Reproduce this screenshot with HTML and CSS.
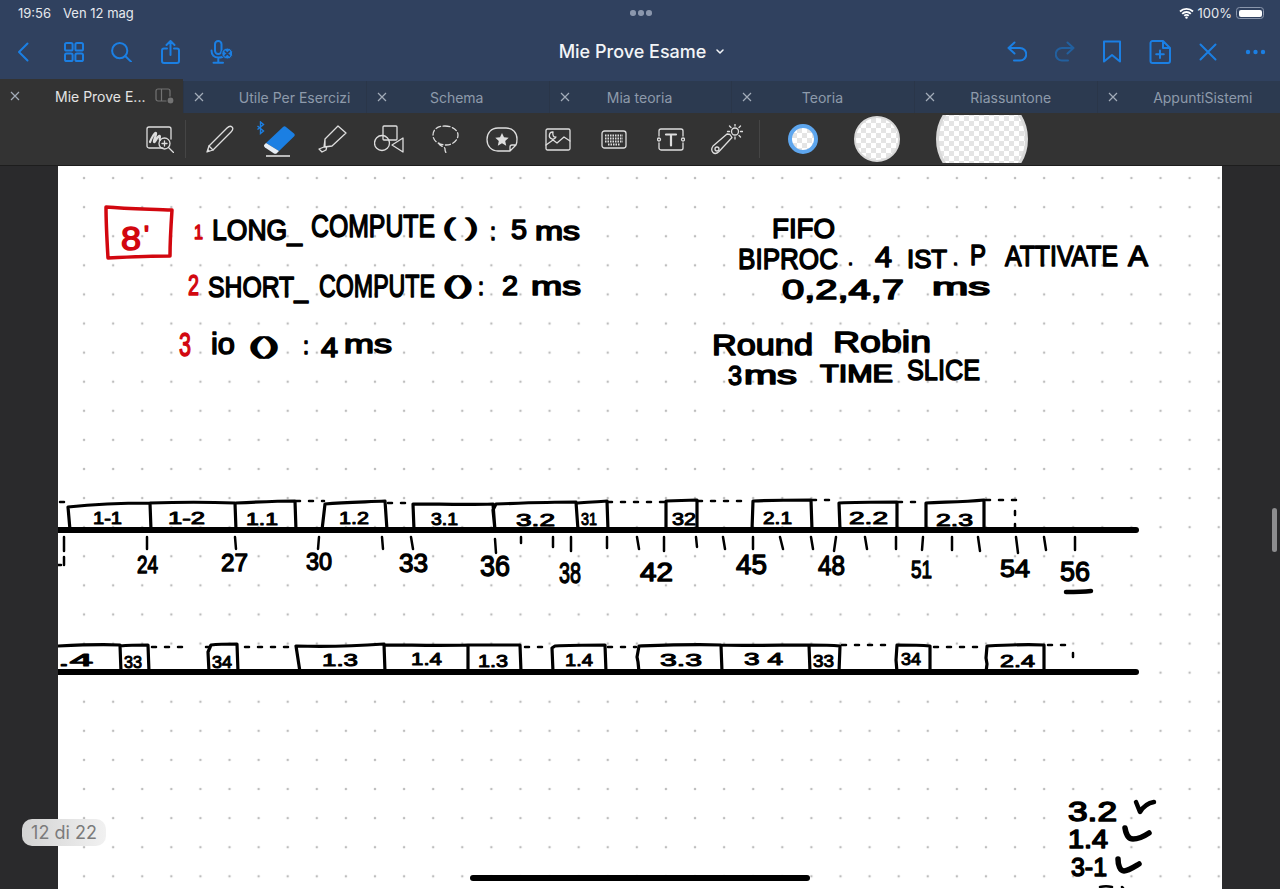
FILE: index.html
```html
<!DOCTYPE html>
<html lang="it">
<head>
    <meta charset="UTF-8">
    <meta name="viewport" content="width=device-width, initial-scale=1.0">
    <title>Mie Prove Esame</title>
    <link rel="stylesheet" href="styles.css">
</head>
<body>

    <header class="top-bar">
        <div class="status-bar">
            <div class="status-left"><span>19:56</span><span>Ven 12 mag</span></div>
            <div class="status-dots"><i></i><i></i><i></i></div>
            <div class="status-right">
                <svg width="15" height="12" viewBox="0 0 15 12"><path class="wifi" d="M1 4.5a9.2 9.2 0 0 1 13 0M3.2 6.8a6 6 0 0 1 8.6 0M5.3 8.9a3 3 0 0 1 4.4 0"/><circle cx="7.5" cy="10.6" r="1.2" fill="#fff"/></svg>
                <span>100%</span>
                <div class="battery"><div class="battery-fill"></div></div>
            </div>
        </div>
        <nav class="nav-bar">
            <div class="nav-group">
                <svg class="nav-icon back" width="12" height="20" viewBox="0 0 12 20"><path d="M10.5 1.5 2 10l8.5 8.5"/></svg>
                <svg class="nav-icon grid" width="20" height="20" viewBox="0 0 20 20"><rect x="1" y="1" width="7.6" height="7.6" rx="1.6"/><rect x="11.4" y="1" width="7.6" height="7.6" rx="1.6"/><rect x="1" y="11.4" width="7.6" height="7.6" rx="1.6"/><rect x="11.4" y="11.4" width="7.6" height="7.6" rx="1.6"/></svg>
                <svg class="nav-icon search" width="21" height="20" viewBox="0 0 21 20"><circle cx="8.7" cy="8.7" r="7.6"/><path d="m14.2 14 5.8 5.6"/></svg>
                <svg class="nav-icon share" width="19" height="24" viewBox="0 0 19 24"><path d="M6 8.5H3a2 2 0 0 0-2 2V21a2 2 0 0 0 2 2h13a2 2 0 0 0 2-2V10.500a2 2 0 0 0-2-2h-3M9.500 15V1.500M5.500 5l4-4 4 4"/></svg>
                <svg class="nav-icon mic" width="23" height="24" viewBox="0 0 23 24"><rect x="5" y="1" width="6.500" height="13" rx="3.200"/><path d="M1.500 10.500c0 4.500 2.800 7 6.800 7s5-1 5-1M8.300 17.500V22M3.500 22.800h9.500"/><circle class="mic-badge" cx="17.300" cy="13.500" r="5.500"/><path class="mic-x" d="m15.200 11.400 4.200 4.200m0-4.200-4.200 4.200"/></svg>
            </div>
            <div class="doc-title">Mie Prove Esame
                <svg class="doc-caret" width="8" height="5" viewBox="0 0 8 5"><path d="m1 1 3 3 3-3"/></svg>
            </div>
            <div class="nav-group nav-group-right">
                <svg class="nav-icon" width="20" height="21" viewBox="0 0 20 21"><path d="M7.500 1.500 1.500 7l6 5.500M1.500 7H13a5.800 5.800 0 0 1 0 12.500H7"/></svg>
                <svg class="nav-icon dim" width="20" height="21" viewBox="0 0 20 21"><path d="m12.500 1.500 6 5.500-6 5.500M18.500 7H7a5.800 5.800 0 0 0 0 12.500h6"/></svg>
                <svg class="nav-icon" width="18" height="23" viewBox="0 0 18 23"><path d="M1 1.500h16V21.500l-8-6.500-8 6.500z"/></svg>
                <svg class="nav-icon" width="22" height="24" viewBox="0 0 22 24"><path d="M3.500 1H14l7 7v13a2 2 0 0 1-2 2H3.500a2 2 0 0 1-2-2V3a2 2 0 0 1 2-2zM14 1v7h7M11 10.500v7.500M7.200 14.200h7.600"/></svg>
                <svg class="nav-icon" width="18" height="18" viewBox="0 0 18 18"><path d="M1.500 1.500 16.500 16.500M16.500 1.500 1.500 16.500"/></svg>
                <svg class="nav-dots" width="21" height="6" viewBox="0 0 21 6"><circle cx="3" cy="3" r="2.200"/><circle cx="10.500" cy="3" r="2.200"/><circle cx="18" cy="3" r="2.200"/></svg>
            </div>
        </nav>
    </header>

    <div class="tab-row">
        <div class="tab tab-active">
            <svg class="tab-close" width="10" height="10" viewBox="0 0 10 10"><path d="m1 1 8 8m0-8-8 8"/></svg>
            <span class="tab-label">Mie Prove E...</span>
            <svg class="tab-split" width="20" height="17" viewBox="0 0 20 17"><rect x="1" y="1" width="14" height="12" rx="2"/><path d="M6.500 1v12"/><circle class="tab-split-dot" cx="15.500" cy="12.500" r="3.500"/></svg>
        </div>
        <div class="tab">
            <svg class="tab-close" width="10" height="10" viewBox="0 0 10 10"><path d="m1 1 8 8m0-8-8 8"/></svg>
            <span class="tab-label">Utile Per Esercizi</span>
        </div>
        <div class="tab">
            <svg class="tab-close" width="10" height="10" viewBox="0 0 10 10"><path d="m1 1 8 8m0-8-8 8"/></svg>
            <span class="tab-label">Schema</span>
        </div>
        <div class="tab">
            <svg class="tab-close" width="10" height="10" viewBox="0 0 10 10"><path d="m1 1 8 8m0-8-8 8"/></svg>
            <span class="tab-label">Mia teoria</span>
        </div>
        <div class="tab">
            <svg class="tab-close" width="10" height="10" viewBox="0 0 10 10"><path d="m1 1 8 8m0-8-8 8"/></svg>
            <span class="tab-label">Teoria</span>
        </div>
        <div class="tab">
            <svg class="tab-close" width="10" height="10" viewBox="0 0 10 10"><path d="m1 1 8 8m0-8-8 8"/></svg>
            <span class="tab-label">Riassuntone</span>
        </div>
        <div class="tab">
            <svg class="tab-close" width="10" height="10" viewBox="0 0 10 10"><path d="m1 1 8 8m0-8-8 8"/></svg>
            <span class="tab-label">AppuntiSistemi</span>
        </div>
    </div>

    <div class="toolbar">
        <div class="tool tool-zoom">
            <svg class="tool-icon" width="28" height="27" viewBox="0 0 28 27"><path d="M17 22H3a2 2 0 0 1-2-2V3a2 2 0 0 1 2-2h20a2 2 0 0 1 2 2v10"/><path class="thick" d="M4 16c2-5 5-10 6-9s-3 8-2 9 3-5 5-6 0 3 1 4"/><circle cx="18.500" cy="17.500" r="5.500"/><path d="m22.500 21.500 5 5M18.500 15v5M16 17.500h5"/></svg>
        </div>
        <div class="tool-divider"></div>
        <div class="tool">
            <svg class="tool-icon" width="28" height="28" viewBox="0 0 28 28"><path d="M1 27l2-6L21 3c2-2 4-2 5-1s1 3-1 5L7 25z"/><path d="m3 21 4 4"/><path class="solid" d="m1 27 1-3 2 2z"/></svg>
        </div>
        <div class="tool">
            <svg width="40" height="36" viewBox="0 0 40 36"><path class="bt" d="m1.500 5 6 5-3 2.500V1l3 2.500-6 5"/><path class="eraser-body" d="M10 22 27 6c1-1 2-1 3 0l8 6.500c1 1 1 2 0 3L23 30z"/><path class="eraser-tip" d="m10 22 13 8-2 2c-1 1-2 1-3 .5l-9-6c-1-1-1.500-2-.500-3z"/><path class="eraser-line" d="M10 35h24"/></svg>
        </div>
        <div class="tool">
            <svg class="tool-icon" width="30" height="29" viewBox="0 0 30 29"><path d="m8 14 13-13 8 7-14 13-7 1zM8 14l-1 8M15 21l-8 1M7 22l-5 2 3 3 4-2 .5-2"/></svg>
        </div>
        <div class="tool">
            <svg class="tool-icon" width="30" height="29" viewBox="0 0 30 29"><rect x="9" y="1" width="14" height="14" rx="1"/><circle cx="8" cy="18" r="7.500"/><path d="m29 13v14l-11-7z"/></svg>
        </div>
        <div class="tool">
            <svg class="tool-icon dashed" width="27" height="29" viewBox="0 0 27 29"><path d="M13 1c7 0 13 4 13 9s-5 10-12 10S1 16 1 10 6 1 13 1zM7 18c-1 3 6 3 6 6s1 3 1 4"/></svg>
        </div>
        <div class="tool">
            <svg class="tool-icon" width="32" height="25" viewBox="0 0 32 25"><path d="M20 24h-8C5 24 1 19 1 12.500S5 1 12 1h8c7 0 11 5 11 11 0 3-.5 5-1 6l-6 6zM24 24v-4a2 2 0 0 1 2-2h4"/><path class="solid" d="m16 6 2 4.300 4.700.5-3.500 3.200 1 4.700-4.200-2.400-4.200 2.400 1-4.700-3.500-3.200 4.700-.5z"/></svg>
        </div>
        <div class="tool">
            <svg class="tool-icon" width="26" height="23" viewBox="0 0 26 23"><rect x="1" y="1" width="24" height="21" rx="1.500"/><path d="M1 17 8 12l4 3 7-6 6 4M8 4a3.500 3.500 0 1 0 3 5c-2 .5-4-1-3-5z"/></svg>
        </div>
        <div class="tool">
            <svg class="tool-icon" width="26" height="19" viewBox="0 0 26 19"><rect x="1" y="1" width="24" height="17" rx="2.500"/><path class="dots" d="M4 5.500h18M4 8.500h18M4 11.500h18M7 14.500h12"/></svg>
        </div>
        <div class="tool">
            <svg class="tool-icon" width="28" height="23" viewBox="0 0 28 23"><path d="M2 8V3a2 2 0 0 1 2-2h20a2 2 0 0 1 2 2v5M26 15v5a2 2 0 0 1-2 2H4a2 2 0 0 1-2-2v-5"/><circle cx="2" cy="11.500" r="1.500"/><circle cx="26" cy="11.500" r="1.500"/><path class="thick" d="M9 6.500h10M14 6.500v11"/></svg>
        </div>
        <div class="tool">
            <svg class="tool-icon" width="32" height="31" viewBox="0 0 32 31"><path d="m2 22 14-12 3 .5 2 3-13 14c-2 2-4 3-6 1s-1-5 0-6.500z"/><circle cx="6" cy="25" r="2"/><circle cx="24" cy="7.500" r="3.500"/><path d="M24 0v2M24 13v2M16.500 7.500h2M29.500 7.500h2M18.500 2l1.500 1.500M28 11.500l1.500 1.500M29.500 2 28 3.500"/></svg>
        </div>
        <div class="tool-divider tool-divider-right"></div>
        <div class="swatch swatch-blue"></div>
        <div class="swatch swatch-white"></div>
        <div class="swatch-clip"><div class="swatch swatch-large"></div></div>
    </div>

    <main class="workspace">
        <div class="note-page">
            <svg class="note-ink" width="1164" height="722" viewBox="58 167 1164 722">
                <!-- exercise text -->
                <path class="red-line" d="M106 208c22 2 46 2 66 3-1 15-2 32-2 46-20 0-42 1-62 2-1-17-2-34-2-51z"/>
                <text class="hand red" x="121" y="251" font-size="33" textLength="20" lengthAdjust="spacingAndGlyphs">8</text>
                <text class="hand red" x="144" y="244" font-size="24" textLength="5" lengthAdjust="spacingAndGlyphs">'</text>
                <text class="hand red" x="194" y="240" font-size="20" textLength="9" lengthAdjust="spacingAndGlyphs">1</text>
                <text class="hand red" x="188" y="296" font-size="29" textLength="11" lengthAdjust="spacingAndGlyphs">2</text>
                <text class="hand red" x="179" y="357" font-size="34" textLength="12" lengthAdjust="spacingAndGlyphs">3</text>

                <text class="hand" x="212" y="241" font-size="30" textLength="90" lengthAdjust="spacingAndGlyphs">LONG_</text>
                <text class="hand" x="311" y="238" font-size="32" textLength="124" lengthAdjust="spacingAndGlyphs">COMPUTE</text>
                <text class="hand" x="443" y="236" font-size="24" textLength="35" lengthAdjust="spacingAndGlyphs">( )</text>
                <text class="hand" x="490" y="241" font-size="24" textLength="6" lengthAdjust="spacingAndGlyphs">:</text>
                <text class="hand" x="511" y="240" font-size="28" textLength="16" lengthAdjust="spacingAndGlyphs">5</text>
                <text class="hand" x="535" y="241" font-size="26" textLength="45" lengthAdjust="spacingAndGlyphs">ms</text>

                <text class="hand" x="208" y="298" font-size="30" textLength="100" lengthAdjust="spacingAndGlyphs">SHORT_</text>
                <text class="hand" x="319" y="298" font-size="32" textLength="116" lengthAdjust="spacingAndGlyphs">COMPUTE</text>
                <text class="hand" x="443" y="294" font-size="24" textLength="30" lengthAdjust="spacingAndGlyphs">()</text>
                <text class="hand" x="478" y="296" font-size="24" textLength="6" lengthAdjust="spacingAndGlyphs">:</text>
                <text class="hand" x="502" y="296" font-size="28" textLength="16" lengthAdjust="spacingAndGlyphs">2</text>
                <text class="hand" x="531" y="296" font-size="26" textLength="50" lengthAdjust="spacingAndGlyphs">ms</text>

                <text class="hand" x="211" y="355" font-size="30" textLength="24" lengthAdjust="spacingAndGlyphs">io</text>
                <text class="hand" x="249" y="354" font-size="22" textLength="30" lengthAdjust="spacingAndGlyphs">()</text>
                <text class="hand" x="303" y="355" font-size="24" textLength="6" lengthAdjust="spacingAndGlyphs">:</text>
                <text class="hand" x="321" y="358" font-size="27" textLength="17" lengthAdjust="spacingAndGlyphs">4</text>
                <text class="hand" x="344" y="354" font-size="26" textLength="48" lengthAdjust="spacingAndGlyphs">ms</text>

                <text class="hand" x="772" y="239" font-size="28" textLength="63" lengthAdjust="spacingAndGlyphs">FIFO</text>
                <text class="hand" x="738" y="270" font-size="30" textLength="100" lengthAdjust="spacingAndGlyphs">BIPROC</text>
                <text class="hand" x="848" y="266" font-size="18" textLength="5" lengthAdjust="spacingAndGlyphs">.</text>
                <text class="hand" x="875" y="268" font-size="30" textLength="17" lengthAdjust="spacingAndGlyphs">4</text>
                <text class="hand" x="907" y="269" font-size="25" textLength="40" lengthAdjust="spacingAndGlyphs">IST</text>
                <text class="hand" x="953" y="266" font-size="18" textLength="5" lengthAdjust="spacingAndGlyphs">.</text>
                <text class="hand" x="970" y="266" font-size="29" textLength="16" lengthAdjust="spacingAndGlyphs">P</text>
                <text class="hand" x="1005" y="267" font-size="30" textLength="113" lengthAdjust="spacingAndGlyphs">ATTIVATE</text>
                <text class="hand" x="1128" y="267" font-size="30" textLength="20" lengthAdjust="spacingAndGlyphs">A</text>
                <text class="hand" x="782" y="300" font-size="27" textLength="122" lengthAdjust="spacingAndGlyphs">0,2,4,7</text>
                <text class="hand" x="932" y="296" font-size="24" textLength="58" lengthAdjust="spacingAndGlyphs">ms</text>
                <text class="hand" x="712" y="356" font-size="30" textLength="101" lengthAdjust="spacingAndGlyphs">Round</text>
                <text class="hand" x="833" y="353" font-size="30" textLength="98" lengthAdjust="spacingAndGlyphs">Robin</text>
                <text class="hand" x="728" y="386" font-size="27" textLength="14" lengthAdjust="spacingAndGlyphs">3</text>
                <text class="hand" x="744" y="385" font-size="25" textLength="53" lengthAdjust="spacingAndGlyphs">ms</text>
                <text class="hand" x="820" y="383" font-size="23" textLength="73" lengthAdjust="spacingAndGlyphs">TIME</text>
                <text class="hand" x="907" y="381" font-size="30" textLength="73" lengthAdjust="spacingAndGlyphs">SLICE</text>

                <!-- first timeline -->
                <path class="axis" d="M58 531H1136"/>
                <path class="box-line" d="M70 531 68 508c28-3 54-4 82-4l1 27M150 504c30-1 58-1 85 0l1 27M236 504c20-1 40-2 59-2l1 29M322 531l3-26c20-2 40-2 60-3l2 29M414 531l-1-26c26 0 54 1 80 0l2 26M495 531l-2-20 3-6c26-1 56-2 80-2l2 28M578 504c10-1 20-1 29-2l1 29M666 531V502l31-1v30M752 531l1-29c18-1 38-1 58-1l1 30M840 531l-1-27c18-1 38-1 58-1v28M926 531v-27c18-1 38-1 58-3v30"/>
                <path class="dash-line" d="M60 503h8M296 502h28M388 504h24M608 503h56M698 502h52M812 501h26M898 503h26M986 501h30M1015 512v16"/>
                <path class="tick" d="M64 538v14M147 538v12M235 538l1 12M319 538l-1 12M382 538l1 12M411 538l2 12M495 540l1 14M521 538v6M553 538v10M571 538v14M607 538v11M637 538l2 12M664 538v14M696 538l1 10M723 538l2 12M753 538v12M780 538l3 12M811 538l2 12M836 538l-2 14M865 538l2 12M896 538v12M923 538l-1 13M952 538v13M978 538l2 14M1016 538l2 16M1044 538l2 13M1075 538v13"/>
                <path class="tick" d="M64 558v8M58 566h3"/>
                <text class="hand num" x="137" y="574" font-size="23" textLength="21" lengthAdjust="spacingAndGlyphs">24</text>
                <text class="hand num" x="221" y="572" font-size="24" textLength="27" lengthAdjust="spacingAndGlyphs">27</text>
                <text class="hand num" x="306" y="571" font-size="24" textLength="26" lengthAdjust="spacingAndGlyphs">30</text>
                <text class="hand num" x="399" y="573" font-size="25" textLength="29" lengthAdjust="spacingAndGlyphs">33</text>
                <text class="hand num" x="480" y="577" font-size="29" textLength="30" lengthAdjust="spacingAndGlyphs">36</text>
                <text class="hand num" x="559" y="584" font-size="30" textLength="22" lengthAdjust="spacingAndGlyphs">38</text>
                <text class="hand num" x="640" y="582" font-size="25" textLength="33" lengthAdjust="spacingAndGlyphs">42</text>
                <text class="hand num" x="736" y="575" font-size="27" textLength="31" lengthAdjust="spacingAndGlyphs">45</text>
                <text class="hand num" x="818" y="576" font-size="27" textLength="27" lengthAdjust="spacingAndGlyphs">48</text>
                <text class="hand num" x="911" y="579" font-size="24" textLength="21" lengthAdjust="spacingAndGlyphs">51</text>
                <text class="hand num" x="1000" y="578" font-size="24" textLength="30" lengthAdjust="spacingAndGlyphs">54</text>
                <text class="hand num" x="1060" y="582" font-size="27" textLength="30" lengthAdjust="spacingAndGlyphs">56</text>
                <path class="underline" d="M1066 593c8 0 16 0 25-1"/>

                <text class="hand small" x="93" y="525" textLength="29" lengthAdjust="spacingAndGlyphs">1-1</text>
                <text class="hand small" x="168" y="525" textLength="37" lengthAdjust="spacingAndGlyphs">1-2</text>
                <text class="hand small" x="246" y="526" textLength="32" lengthAdjust="spacingAndGlyphs">1.1</text>
                <text class="hand small" x="339" y="525" textLength="30" lengthAdjust="spacingAndGlyphs">1.2</text>
                <text class="hand small" x="431" y="526" textLength="27" lengthAdjust="spacingAndGlyphs">3.1</text>
                <text class="hand small" x="516" y="527" textLength="39" lengthAdjust="spacingAndGlyphs">3.2</text>
                <text class="hand small" x="581" y="526" textLength="16" lengthAdjust="spacingAndGlyphs">31</text>
                <text class="hand small" x="672" y="526" textLength="24" lengthAdjust="spacingAndGlyphs">32</text>
                <text class="hand small" x="763" y="525" textLength="29" lengthAdjust="spacingAndGlyphs">2.1</text>
                <text class="hand small" x="849" y="525" textLength="39" lengthAdjust="spacingAndGlyphs">2.2</text>
                <text class="hand small" x="936" y="527" textLength="37" lengthAdjust="spacingAndGlyphs">2.3</text>

                <!-- second timeline -->
                <path class="axis" d="M58 673H1136"/>
                <path class="box-line" d="M58 647c20-1 42-2 62-1l1 27M120 647c10-1 20-1 28-1l1 27M209 673l-1-20 3-7c8-1 18-1 26-1l1 28M300 673l-4-26c30 1 60 0 88-2l1 28M384 646c28 0 56 1 84 0v27M468 646h52l1 27M553 673l-1-24 3-2c16-1 34-1 50-1l1 27M639 673l-1-10-1-5 2-11c28-1 54-2 82-1l1 27M721 646c30 1 60 0 88 0l1 27M809 646c10 0 20 0 31 1l-1 26M897 673l-1-12 1-15c10 0 22 0 33 1v26M986 673l1-8-1-6 1-12c18-1 38-2 57-1v27"/>
                <path class="dash-line" d="M152 648h32M206 648h3M245 648h46M525 648h26M608 648h28M842 646h52M934 648h50M1048 646h26M1073 654v12"/>
                <text class="hand small" x="58" y="667" textLength="35" lengthAdjust="spacingAndGlyphs"> .4</text>
                <text class="hand small" x="124" y="669" textLength="18" lengthAdjust="spacingAndGlyphs">33</text>
                <text class="hand small" x="212" y="669" textLength="20" lengthAdjust="spacingAndGlyphs">34</text>
                <text class="hand small" x="322" y="667" textLength="36" lengthAdjust="spacingAndGlyphs">1.3</text>
                <text class="hand small" x="411" y="666" textLength="31" lengthAdjust="spacingAndGlyphs">1.4</text>
                <text class="hand small" x="478" y="668" textLength="30" lengthAdjust="spacingAndGlyphs">1.3</text>
                <text class="hand small" x="565" y="667" textLength="28" lengthAdjust="spacingAndGlyphs">1.4</text>
                <text class="hand small" x="660" y="667" textLength="42" lengthAdjust="spacingAndGlyphs">3.3</text>
                <text class="hand small" x="744" y="666" textLength="39" lengthAdjust="spacingAndGlyphs">3 4</text>
                <text class="hand small" x="813" y="668" textLength="21" lengthAdjust="spacingAndGlyphs">33</text>
                <text class="hand small" x="901" y="666" textLength="20" lengthAdjust="spacingAndGlyphs">34</text>
                <text class="hand small" x="1000" y="668" textLength="35" lengthAdjust="spacingAndGlyphs">2.4</text>

                <!-- checked list -->
                <text class="hand" x="1068" y="822" font-size="27" textLength="49" lengthAdjust="spacingAndGlyphs">3.2</text>
                <path class="check" d="M1136 803l4 10c3-5 8-9 14-10"/>
                <text class="hand" x="1068" y="849" font-size="26" textLength="40" lengthAdjust="spacingAndGlyphs">1.4</text>
                <path class="check thick-check" d="M1125 829c1 6 3 11 8 11s10-2 16-6"/>
                <text class="hand" x="1071" y="877" font-size="26" textLength="36" lengthAdjust="spacingAndGlyphs">3-1</text>
                <path class="check thick-check" d="M1118 860c0 6 2 12 6 12s10-4 15-7"/>
                <path class="tick" d="M1100 888c4-1 8-1 12 0M1122 888l1 1"/>
            </svg>
        </div>
    </main>

    <div class="page-count">12 di 22</div>
    <div class="scroll-thumb"></div>
    <div class="home-bar"></div>

</body>
</html>
```

FILE: styles.css
```css
* {
    box-sizing: border-box;
}

body {
    display: flex;
    flex-direction: column;
    height: 100vh;
    margin: 0;
    overflow: hidden;
    position: relative;
    background-color: #2a2a2c;
    font-family: Inter, "Liberation Sans", sans-serif;
}

svg {
    display: block;
    flex: none;
}

/* status bar and navigation */

.top-bar {
    height: 81px;
    background-color: #30415f;
    color: #fff;
}

.status-bar {
    display: flex;
    justify-content: space-between;
    align-items: center;
    height: 26px;
    padding: 0 16px 0 18px;
    font-size: 13px;
    color: #e6e9ee;
}

.status-left {
    display: flex;
    gap: 12px;
    width: 300px;
}

.status-dots {
    display: flex;
    gap: 2.500px;
}

.status-dots i {
    width: 5.500px;
    height: 5.500px;
    border-radius: 50%;
    background-color: #8b97ad;
}

.status-right {
    display: flex;
    justify-content: flex-end;
    align-items: center;
    gap: 4px;
    width: 300px;
}

.wifi {
    fill: none;
    stroke: #fff;
    stroke-width: 1.800;
}

.battery {
    width: 28px;
    height: 12px;
    padding: 1.500px;
    border: 1px solid #8b97ad;
    border-radius: 3.500px;
}

.battery-fill {
    height: 100%;
    border-radius: 2px;
    background-color: #fff;
}

.nav-bar {
    display: grid;
    grid-template-columns: 1fr auto 1fr;
    align-items: center;
    height: 51px;
    padding: 0 14px 0 17px;
}

.nav-group {
    display: flex;
    align-items: center;
}

.back { margin-right: 35px; }
.grid { margin-right: 27px; }
.search { margin-right: 29px; }
.share { margin-right: 30px; }

.nav-group-right {
    justify-content: flex-end;
    gap: 28px;
}

.nav-icon {
    fill: none;
    stroke: #1b7fe3;
    stroke-width: 2;
    stroke-linecap: round;
    stroke-linejoin: round;
}

.nav-icon.dim {
    stroke: #22609f;
}

.mic-badge {
    fill: #1b7fe3;
    stroke: #30415f;
    stroke-width: 1;
}

.mic-x {
    stroke: #30415f;
    stroke-width: 1.600;
}

.nav-dots {
    fill: #1b7fe3;
}

.doc-title {
    display: flex;
    align-items: center;
    gap: 10px;
    font-size: 18px;
    font-weight: 500;
    color: #f2f4f7;
}

.doc-caret {
    fill: none;
    stroke: #f2f4f7;
    stroke-width: 1.500;
    stroke-linecap: round;
    stroke-linejoin: round;
}

/* document tabs */

.tab-row {
    display: grid;
    grid-template-columns: repeat(7, 1fr);
    height: 32px;
    background-color: #2c3a50;
}

.tab {
    display: flex;
    align-items: center;
    padding-left: 10px;
    border-left: 1px solid #2a3649;
    font-size: 14px;
    color: #8e9aab;
    white-space: nowrap;
    overflow: hidden;
}

.tab-active {
    height: 34px;
    margin-top: -2px;
    border-left: 0;
    color: #e4e4e4;
    background-color: #333333;
}

.tab-close {
    fill: none;
    stroke: #a3acb9;
    stroke-width: 1.200;
}

.tab-label {
    min-width: 70px;
    margin-left: 35px;
    text-align: center;
}

.tab-split {
    margin-left: 10px;
    fill: none;
    stroke: #737373;
    stroke-width: 1.200;
}

.tab-split-dot {
    fill: #737373;
    stroke: #333333;
}

/* drawing tools */

.toolbar {
    display: flex;
    align-items: center;
    flex: none;
    height: 53px;
    padding-left: 135px;
    background-color: #333333;
    border-bottom: 1px solid #1d1d1d;
    overflow: hidden;
}

.tool {
    display: flex;
    justify-content: center;
    align-items: center;
    width: 56.400px;
}

.tool-zoom {
    width: 49.500px;
}

.tool-divider {
    width: 1px;
    height: 38px;
    margin-right: 6px;
    background-color: #454545;
}

.tool-divider-right {
    margin-left: 4px;
    margin-right: 28px;
}

.tool-icon {
    fill: none;
    stroke: #dedede;
    stroke-width: 1.300;
    stroke-linecap: round;
    stroke-linejoin: round;
}

.tool-icon.dashed {
    stroke-dasharray: 5 2.500;
}

.tool-icon .thick {
    stroke-width: 2.200;
}

.tool-icon .solid {
    fill: #dedede;
    stroke: none;
}

.tool-icon .dots {
    stroke-width: 2;
    stroke-dasharray: 1.500 1;
    stroke-linecap: butt;
}

.bt {
    fill: none;
    stroke: #1b7fe3;
    stroke-width: 1.400;
}

.eraser-body {
    fill: #1b7fe3;
}

.eraser-tip {
    fill: #e8eef5;
}

.eraser-line {
    fill: none;
    stroke: #e8e8e8;
    stroke-width: 1.500;
}

.swatch {
    border-radius: 50%;
    background: repeating-conic-gradient(#e4e4e4 0 25%, #ffffff 0 50%) 0 0 / 10px 10px;
}

.swatch-blue {
    width: 30px;
    height: 30px;
    margin-right: 36px;
    border: 4px solid #5ea6ee;
    background-color: #fbe9dc;
}

.swatch-white {
    width: 46px;
    height: 46px;
    margin-right: 36px;
    border: 2px solid #d9d9d9;
}

.swatch-clip {
    display: flex;
    align-items: center;
    height: 48px;
    overflow: hidden;
}

.swatch-large {
    width: 92px;
    height: 92px;
    flex: none;
    border: 3px solid #d9d9d9;
}

/* page with handwritten notes */

.workspace {
    flex: 1;
    min-height: 0;
    padding: 0 58px;
}

.note-page {
    height: 100%;
    overflow: hidden;
    background-color: #fff;
    background-image: radial-gradient(circle, #bdbdbd 1.100px, transparent 1.600px);
    background-size: 29.100px 29.100px;
    background-position: 11.500px -2.500px;
}

.note-ink {
    fill: none;
    stroke-linecap: round;
    stroke-linejoin: round;
}

.hand {
    font-family: "Liberation Sans", sans-serif;
    fill: #000;
    stroke: #000;
    stroke-width: 1.500;
}

.hand.red {
    fill: #d2070f;
    stroke: #d2070f;
}

.hand.small {
    font-size: 17px;
    stroke-width: 1;
}

.hand.num {
    stroke-width: 1.300;
}

.red-line {
    stroke: #d2070f;
    stroke-width: 3.500;
}

.axis {
    stroke: #000;
    stroke-width: 6;
}

.box-line {
    stroke: #000;
    stroke-width: 3.200;
}

.dash-line {
    stroke: #000;
    stroke-width: 2.500;
    stroke-dasharray: 4 9;
}

.tick {
    stroke: #000;
    stroke-width: 2.500;
}

.underline {
    stroke: #000;
    stroke-width: 4.500;
}

.check {
    stroke: #000;
    stroke-width: 4.500;
}

.thick-check {
    stroke-width: 5.500;
}

/* things over the page */

.page-count {
    position: absolute;
    left: 22px;
    top: 819px;
    width: 84px;
    height: 27px;
    border-radius: 10px;
    background: linear-gradient(90deg, #d3d3d3, #f1f1f1);
    font-size: 18px;
    line-height: 27px;
    text-align: center;
    color: #7b7b7b;
}

.scroll-thumb {
    position: absolute;
    left: 1272px;
    top: 508px;
    width: 5px;
    height: 44px;
    border-radius: 3px;
    background-color: #8d8d8f;
}

.home-bar {
    position: absolute;
    left: 470px;
    top: 875px;
    width: 340px;
    height: 6px;
    border-radius: 3px;
    background-color: #000;
}
```
